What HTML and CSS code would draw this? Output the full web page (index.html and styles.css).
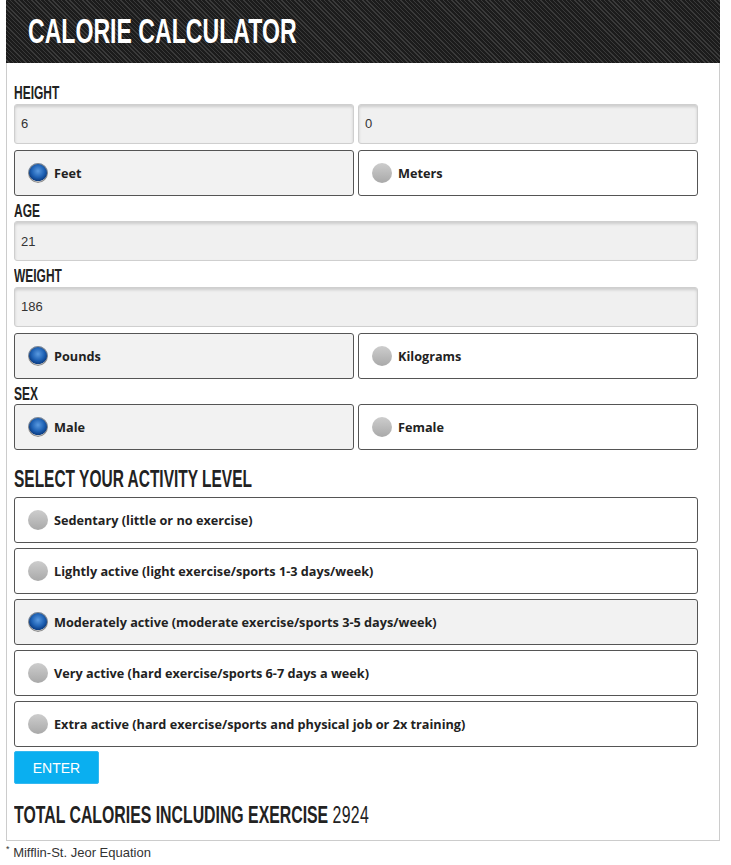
FILE: index.html
```html
<!DOCTYPE html>
<html>
<head>
<meta charset="utf-8">
<link rel="stylesheet" href="styles.css">
</head>
<body>
<div class="page">
  <div class="calc">
    <div class="header"><h1>CALORIE CALCULATOR</h1></div>
    <div class="body">
      <div class="label">HEIGHT</div>
      <div class="row">
        <div class="input">6</div>
        <div class="input">0</div>
      </div>
      <div class="row">
        <div class="opt checked"><span class="radio on"></span>Feet</div>
        <div class="opt"><span class="radio"></span>Meters</div>
      </div>
      <div class="label">AGE</div>
      <div class="input full">21</div>
      <div class="label">WEIGHT</div>
      <div class="input full">186</div>
      <div class="row">
        <div class="opt checked"><span class="radio on"></span>Pounds</div>
        <div class="opt"><span class="radio"></span>Kilograms</div>
      </div>
      <div class="label">SEX</div>
      <div class="row">
        <div class="opt checked"><span class="radio on"></span>Male</div>
        <div class="opt"><span class="radio"></span>Female</div>
      </div>
      <h2 class="section">SELECT YOUR ACTIVITY LEVEL</h2>
      <div class="list">
        <div class="opt wide"><span class="radio"></span>Sedentary (little or no exercise)</div>
        <div class="opt wide"><span class="radio"></span>Lightly active (light exercise/sports 1-3 days/week)</div>
        <div class="opt wide checked"><span class="radio on"></span>Moderately active (moderate exercise/sports 3-5 days/week)</div>
        <div class="opt wide"><span class="radio"></span>Very active (hard exercise/sports 6-7 days a week)</div>
        <div class="opt wide"><span class="radio"></span>Extra active (hard exercise/sports and physical job or 2x training)</div>
      </div>
      <button class="enter">ENTER</button>
      <div class="total"><b>TOTAL CALORIES INCLUDING EXERCISE</b> <span>2924</span></div>
    </div>
  </div>
  <div class="note"><sup>*</sup> Mifflin-St. Jeor Equation</div>
</div>
</body>
</html>
```
FILE: styles.css
```css
html, body { margin: 0; padding: 0; background: #fff; }
.page { padding: 0 6px; font-family: "Open Sans", "Liberation Sans", sans-serif; color: #222; }
.calc { border: 1px solid #ccc; border-top: none; box-sizing: border-box; width: 714px; }
.header {
  height: 63px; margin: 0 -1px;
  background: repeating-linear-gradient(45deg, #1c1c1c 0 2px, #3a3a3a 2px 3px);
  display: flex; align-items: center;
}
.header h1 {
  margin: 0 0 2px 22px; color: #fff; white-space: nowrap;
  font-family: "Liberation Sans", Arial, sans-serif;
  font-weight: bold; font-size: 35px; line-height: 40px;
  transform: scaleX(0.66); transform-origin: 0 50%;
}
.body { padding: 21px 21px 12px 7px; display: flex; flex-direction: column; }
.label {
  font-family: "Liberation Sans", Arial, sans-serif;
  font-weight: bold; font-size: 19px; line-height: 18.5px; color: #222; margin: 0 0 1px;
  transform: scaleX(0.63); transform-origin: 0 50%; white-space: nowrap;
}
.row { display: flex; gap: 4px; margin-bottom: 6px; }
.row > * { flex: 1; }
.input {
  height: 40px; box-sizing: border-box; border: 1px solid #cfcfcf; border-radius: 3px;
  background: #f0f0f0; box-shadow: inset 0 2px 3px rgba(0,0,0,0.15);
  font-family: "Liberation Sans", sans-serif; font-size: 13px; color: #333;
  display: flex; align-items: center; padding-left: 6px;
}
.input.full { margin-bottom: 6px; }
.opt {
  height: 46px; box-sizing: border-box; border: 1px solid #555; border-radius: 3px;
  background: #fff; display: flex; align-items: center; padding-left: 13px;
  font-size: 12.7px; font-weight: bold; color: #222;
}
.opt.checked { background: #f2f2f2; }
.radio {
  width: 20px; height: 20px; border-radius: 50%; box-sizing: border-box; margin-right: 6px;
  background: linear-gradient(#cdcdcd, #a9a9a9);
}
.radio.on {
  background:
    radial-gradient(circle at 50% 40%, #5a9ae0 0, #1f62b5 40%, #0d3f85 62%, rgba(0,0,0,0) 66%),
    linear-gradient(#a0a0a0, #c8c8c8);
  box-shadow: inset 0 0 0 1px #8a8a8a;
}
.section {
  margin: 10px 0 5px;
  font-family: "Liberation Sans", Arial, sans-serif;
  font-weight: bold; font-size: 24px; line-height: 26px; color: #222;
  transform: scaleX(0.645); transform-origin: 0 50%; white-space: nowrap;
}
.list { display: flex; flex-direction: column; gap: 5px; }
.enter {
  align-self: flex-start; margin-top: 4px; width: 85px; height: 33px;
  background: #0aaff0; color: #fff; border: 1px solid #34b8f0; border-radius: 2px;
  font-family: "Liberation Sans", sans-serif; font-size: 14px;
}
.total {
  margin-top: 18px; white-space: nowrap;
  font-family: "Liberation Sans", Arial, sans-serif;
  font-size: 24px; line-height: 26px; color: #222;
  transform: scaleX(0.66); transform-origin: 0 50%;
}
.total span { letter-spacing: 0.5px; }
.note { font-family: "Liberation Sans", sans-serif; font-size: 13px; color: #333; margin-top: 3px; }
.note sup { font-size: 9px; }
```
